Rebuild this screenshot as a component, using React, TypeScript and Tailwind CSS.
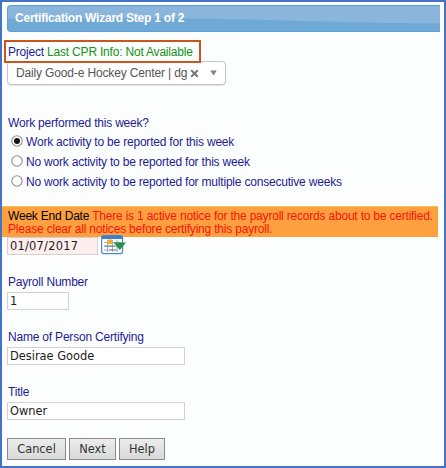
import { useState } from "react"

const workOptions = [
  "Work activity to be reported for this week",
  "No work activity to be reported for this week",
  "No work activity to be reported for multiple consecutive weeks"
]

const inputClass =
  "block h-[18px] border border-[#d2d2d2] pl-[2px] font-['DejaVu_Sans',sans-serif] text-[11.4px] leading-[16px] text-[#1c1c1c] outline-none"

const CalendarIcon = () => (
  <svg width="26" height="20" viewBox="0 0 26 20">
    <rect x="0.6" y="0.6" width="21" height="18" rx="2" fill="#f8fbff" stroke="#4c8bd0" strokeWidth="1.2" />
    <path d="M1 2.2Q1 0.5 2.8 0.5H20q1.6 0 1.6 1.7V4H1z" fill="#3d7fcc" />
    <path d="M3 7.5h17M3 11.2h17M3 15h14M6.5 5v12M11.5 5v12M16 5v12" stroke="#a9adb3" strokeWidth="1" />
    <path d="M3.5 11.2H14M8.5 15H15" stroke="#888e96" strokeWidth="1.2" />
    <rect x="6.5" y="4.5" width="4.5" height="4.5" fill="#f5ad22" />
    <path d="M12.5 7.5H25L18.8 15z" fill="#239347" />
  </svg>
)

const Header = () => (
  <div className="relative ml-[5px] mt-[3px] h-[27px] w-[433px] overflow-hidden rounded-l-[4px] border border-r-0 border-[#5c9fd8] bg-[#6fa9d5]">
    <svg className="absolute inset-0" width="433" height="25" viewBox="0 0 432 25" preserveAspectRatio="none">
      <path d="M0 0H432V17.5C330 17.5 270 12.5 130 12.5H0z" fill="#8ab6dc" />
    </svg>
    <p className="relative pl-[7px] text-[12px] font-bold leading-[25px] tracking-[-0.23px] text-white">
      Certification Wizard Step 1 of 2
    </p>
  </div>
)

const ProjectSelect = () => (
  <div className="ml-[5px] -mt-[2px] flex h-[24px] w-[219px] items-center rounded-[4px] border-[1.5px] border-[#c4c4c4] bg-white pl-[8px] text-[12px] tracking-[-0.15px] text-[#555] shadow-[0_1px_0_#e4e4e4]">
    <span className="w-[172px] whitespace-nowrap">Daily Good-e Hockey Center | dg</span>
    <svg className="ml-[2px]" width="9" height="9" viewBox="0 0 9 9">
      <path d="M1.2 1.2 7.8 7.8M7.8 1.2 1.2 7.8" stroke="#777" strokeWidth="2" />
    </svg>
    <svg className="ml-[11px]" width="7" height="6" viewBox="0 0 7 6">
      <path d="M0.3 0.5H6.7L3.5 5.5z" fill="#808080" />
    </svg>
  </div>
)

const Radio = ({ checked }: { checked: boolean }) => (
  <svg width="12" height="12" viewBox="0 0 12 12">
    <circle cx="6" cy="6" r="5.2" fill="#fff" stroke="#8e8e8e" strokeWidth="1.1" />
    {checked && <circle cx="6" cy="6" r="3" fill="#111" />}
  </svg>
)

const Field = ({ label, value, width }: { label: string; value: string; width: string }) => (
  <div className="ml-[5px] h-[55px]">
    <label className="block pl-px leading-[14px]">{label}</label>
    <input className={`${inputClass} mt-[3px] bg-white tracking-normal ${width}`} defaultValue={value} />
  </div>
)

const Button = ({ label, width }: { label: string; width: string }) => (
  <button
    className={`${width} h-[22px] border border-[#8a8a8a] bg-gradient-to-b from-[#ececec] to-[#d9d9d9] text-center font-['DejaVu_Sans',sans-serif] text-[11.4px] leading-[20px] tracking-normal text-[#333]`}>
    {label}
  </button>
)

const App = () => {
  const [selected, setSelected] = useState(0)

  return (
    <div className="h-[468px] w-[446px] overflow-hidden border-2 border-[#4472c4] bg-[#fcfefe] font-['Liberation_Sans',Arial,sans-serif] text-[12px] tracking-[-0.2px] text-[#1c1c94]">
      <Header />
      <div className="relative z-10 ml-[2px] mt-[8px] h-[23px] w-[197px] whitespace-nowrap border-2 border-[#c8571f] pl-[2px] leading-[20px]">
        Project <span className="text-[#169116]">Last CPR Info: Not Available</span>
      </div>
      <ProjectSelect />

      <div className="ml-[6px] mt-[31px] h-[90px]">
        <p className="leading-[14px]">Work performed this week?</p>
        <div className="mt-px">
          {workOptions.map((option, index) => (
            <label
              className="flex h-[20px] items-center pl-[3px]"
              key={option}
              onClick={() => setSelected(index)}>
              <Radio checked={selected === index} />
              <span className="ml-[3px] pt-px leading-[14px]">{option}</span>
            </label>
          ))}
        </div>
      </div>

      <div className="h-[31px] w-[436px] whitespace-nowrap border-t border-[#f5c458] bg-[#ffa040] pl-[6px] pt-[3px] leading-[13px] text-[#f81408]">
        <span className="text-black">Week End Date</span> There is 1 active notice for the payroll records about to be certified.
        <br />
        Please clear all notices before certifying this payroll.
      </div>
      <div className="ml-[5px] flex h-[38px]">
        <input
          className={`${inputClass} w-[91px] bg-[#ffeeee] tracking-[0.25px]`}
          defaultValue="01/07/2017"
        />
        <div className="relative -mt-[2px] ml-[3px]">
          <CalendarIcon />
        </div>
      </div>

      <Field label="Payroll Number" value="1" width="w-[62px]" />
      <Field label="Name of Person Certifying" value="Desirae Goode" width="w-[178px]" />
      <Field label="Title" value="Owner" width="w-[178px]" />
      <div className="-mt-[2px] ml-[5px] flex gap-[3px]">
        <Button label="Cancel" width="w-[59px]" />
        <Button label="Next" width="w-[47px]" />
        <Button label="Help" width="w-[46px]" />
      </div>
    </div>
  )
}

export default App
